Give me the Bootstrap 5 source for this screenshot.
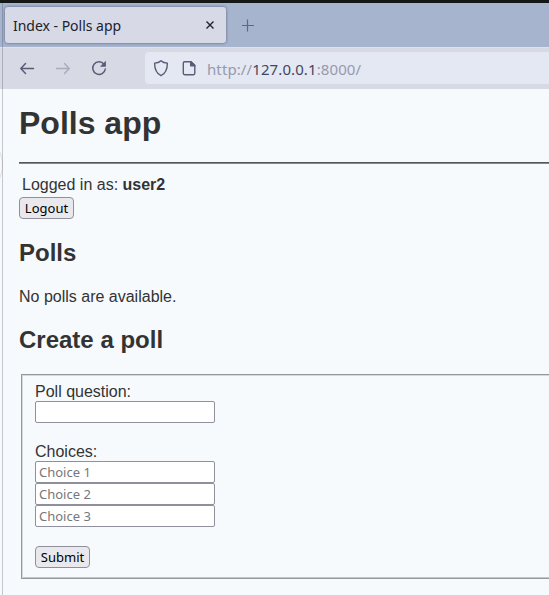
<!DOCTYPE html>
<html lang="en">
<head>
<meta charset="utf-8">
<title>Index - Polls app</title>
<link rel="stylesheet" href="https://cdn.jsdelivr.net/npm/bootstrap@5.3.0/dist/css/bootstrap.min.css">
<style>
body{width:549px;height:595px;background:#f6fafd;color:#333;font:16px/20px "Liberation Sans",Arial,sans-serif}
.window{height:595px}
.ui{font-family:"Noto Sans",sans-serif}
.top-edge{height:3px;background:#141816}
.window-edge{position:absolute;left:2px;top:3px;bottom:0;width:1px;background:rgba(70,70,85,.28)}
.edge-arc{position:absolute;left:-22px;top:144px;width:25px;height:42px;border:1px solid #e4dfdc;border-radius:50%}
.tab-strip{height:44px;background:#a7b4ce;padding:4px 0 0 5px}
.browser-tab{width:221px;height:36px;background:#d7dae6;border-radius:3px;box-shadow:0 0 3px rgba(40,50,75,.65);padding:0 11px 0 8px;color:#20212d}
.tab-title{font-size:14px;letter-spacing:-.02px;padding-top:2px}
.toolbar{height:42px;background:#d7d9e5;border-top:1px solid #dfe2ed;padding:4px 0 0 18px}
.toolbar svg,.tab-strip svg{flex:none;display:block}
.address{height:32px;background:#e4e8f3;border-radius:4px 0 0 4px;margin-left:37px;padding-left:7px;font-size:15px;letter-spacing:.1px;color:#979aab}
.address span{padding-top:2px}
.address b{font-weight:400;color:#44465f}
.page-body{padding:0 0 0 19px;height:506px}
h1,h2,p{margin:0}
.page-body h1{font-size:32px;line-height:36px;font-weight:700;padding-top:16px}
.page-body h2{font-size:24px;line-height:28px;font-weight:700}
.rule{height:2px;background:linear-gradient(#555 50%,#888 50%);margin-top:21px}
.login{height:33px;padding:11px 0 0 3px}
.key{width:55px;height:22px;background:#e9e9ed;border:1px solid #8f8f9d;border-radius:4px;color:#000;font-size:13px;line-height:18px;padding:0;text-align:center;display:block}
.page-body .polls-title{margin-top:20px}
.empty{margin-top:20px}
.page-body .create-title{margin-top:19px;margin-bottom:20px}
.group{margin-left:2px;height:205px;border:1px solid #98979c;border-right:0;box-shadow:inset 1px 1px #d7d8dd,inset 0 -1px #c5c6cb;padding:7px 0 0 13px}
.group label{height:19px}
.field{display:block;width:180px;height:22px;border:1px solid #8f8f9d;border-radius:2px;background:#fff;padding:0 3px;font-size:13px;line-height:20px;color:#333}
.field::placeholder{color:#777;opacity:1}
.choices{height:19px;margin-top:19px}
.submit{margin-top:19px}
</style>
<script src="https://cdn.jsdelivr.net/npm/bootstrap@5.3.0/dist/js/bootstrap.bundle.min.js"></script>
</head>
<body class="overflow-hidden">
<div class="window position-relative overflow-hidden">
<div class="top-edge"></div>
<div class="tab-strip ui d-flex align-items-start">
  <div class="browser-tab d-flex align-items-center justify-content-between">
    <span class="tab-title">Index - Polls app</span>
    <svg width="10" height="10" viewBox="0 0 10 10" stroke="#20212d" stroke-width="1.4"><path d="M1.5 1.5l7 7M8.5 1.5l-7 7"/></svg>
  </div>
  <svg class="ms-3 mt-2" width="14" height="22" viewBox="0 0 14 22" stroke="#64677f" stroke-width="1.2"><path d="M0 10.5h12M5.5 4.5v12"/></svg>
</div>
<div class="toolbar ui d-flex">
  <svg width="90" height="32" viewBox="0 0 90 32" fill="none" stroke="#5b5b76" stroke-width="1.5" stroke-linecap="round" stroke-linejoin="round">
    <path d="M15.5 16.5H3M7.5 11.5L2.8 16.5l4.7 5"/>
    <path d="M38.5 16.5H51M46.5 11.5l4.7 5-4.7 5" stroke="#aaacbe"/>
    <path d="M86 12.2A6.3 6.3 0 1 0 87.3 17"/><path d="M87.5 9.8v4.5H83z" fill="#5b5b76" stroke-width=".8"/>
  </svg>
  <div class="address flex-grow-1 d-flex align-items-center">
    <svg width="55" height="32" viewBox="0 0 55 32" fill="none" stroke="#5b5b76" stroke-width="1.4" stroke-linejoin="round">
      <path d="M9 8.8c1.4 1.4 3.8 2.3 6.4 2.3 0 5.2-1.3 10.3-6.4 12.6-5.1-2.3-6.4-7.4-6.4-12.6 2.6 0 5-.9 6.4-2.3z"/>
      <path d="M32.7 9.7h6.5l3.6 3.6v8q0 1.4-1.4 1.4h-8.7q-1.4 0-1.4-1.4v-10.2q0-1.4 1.4-1.4z"/><path d="M38.7 9.7v4.1h4.1z" fill="#5b5b76"/>
    </svg>
    <span>http://<b>127.0.0.1</b>:8000/</span>
  </div>
</div>
<main class="page-body">
  <h1>Polls app</h1>
  <div class="rule"></div>
  <div class="login">Logged in as: <strong>user2</strong></div>
  <button class="key ui" type="button">Logout</button>
  <h2 class="polls-title">Polls</h2>
  <p class="empty">No polls are available.</p>
  <h2 class="create-title">Create a poll</h2>
  <form class="group">
    <label class="d-block" for="q">Poll question:</label>
    <input class="field ui" id="q" type="text">
    <div class="choices">Choices:</div>
    <input class="field ui" type="text" placeholder="Choice 1">
    <input class="field ui" type="text" placeholder="Choice 2">
    <input class="field ui" type="text" placeholder="Choice 3">
    <button class="key ui submit" type="button">Submit</button>
  </form>
</main>
<div class="edge-arc"></div>
<div class="window-edge"></div>
</div>
</body>
</html>
